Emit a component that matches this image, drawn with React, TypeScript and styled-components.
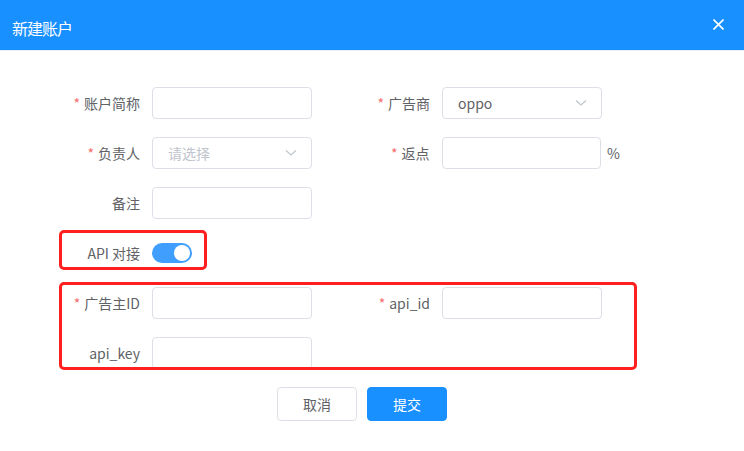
import React from "react";
import styled, { createGlobalStyle } from "styled-components";

const Global = createGlobalStyle`
  html, body { margin: 0; padding: 0; background: #fff; }
  body { font-family: "Noto Sans CJK SC", "Noto Sans", sans-serif; }
  * { box-sizing: border-box; }
`;

const Dialog = styled.div`
  position: relative;
  width: 744px;
  height: 451px;
  background: #fff;
  overflow: hidden;
`;

const Header = styled.div`
  height: 51px;
  background: #1890ff;
  display: flex;
  align-items: center;
  justify-content: space-between;
  padding: 0 20px 0 12px;
  border-bottom: 1px solid #e9eef5;
`;

const Title = styled.div`
  color: #fff;
  font-size: 16px;
  letter-spacing: -1px;
  padding-top: 6px;
`;

const Close = styled.button`
  border: 0;
  background: transparent;
  padding: 0;
  width: 11px;
  height: 11px;
  display: flex;
  margin-top: -2px;
`;

const Body = styled.div`
  padding: 36px 0 0 40px;
`;

const Grid = styled.div`
  display: grid;
  grid-template-columns: 290px 290px;
  row-gap: 18px;
`;

const Item = styled.div`
  display: flex;
  align-items: center;
  height: 32px;
`;

const Label = styled.label`
  width: 112px;
  padding-right: 12px;
  text-align: right;
  font-size: 14px;
  color: #606266;
  white-space: nowrap;
`;

const Star = styled.span`
  color: #f56c6c;
  margin-right: 4px;
`;

const Input = styled.div<{ $placeholder?: boolean }>`
  width: 160px;
  height: 32px;
  border: 1px solid #dcdfe6;
  border-radius: 4px;
  background: #fff;
  display: flex;
  align-items: center;
  justify-content: space-between;
  padding: 0 14px 0 15px;
  font-size: 14px;
  color: ${(p) => (p.$placeholder ? "#c0c4cc" : "#606266")};
`;

const Suffix = styled.span`
  margin-left: 6px;
  font-size: 14px;
  color: #606266;
`;

const Switch = styled.div<{ $on: boolean }>`
  position: relative;
  width: 40px;
  height: 20px;
  border-radius: 10px;
  background: ${(p) => (p.$on ? "#409eff" : "#dcdfe6")};
  &::after {
    content: "";
    position: absolute;
    top: 2px;
    left: ${(p) => (p.$on ? "22px" : "2px")};
    width: 16px;
    height: 16px;
    border-radius: 50%;
    background: #fff;
  }
`;

const Actions = styled.div`
  display: flex;
  gap: 10px;
  padding: 18px 0 0 237px;
`;

const Button = styled.button<{ $primary?: boolean }>`
  width: 80px;
  height: 34px;
  border-radius: 4px;
  font-family: inherit;
  font-size: 14px;
  border: 1px solid ${(p) => (p.$primary ? "#1890ff" : "#dcdfe6")};
  background: ${(p) => (p.$primary ? "#1890ff" : "#fff")};
  color: ${(p) => (p.$primary ? "#fff" : "#606266")};
`;

const Mark = styled.div<{ $x: number; $y: number; $w: number; $h: number }>`
  position: absolute;
  left: ${(p) => p.$x}px;
  top: ${(p) => p.$y}px;
  width: ${(p) => p.$w}px;
  height: ${(p) => p.$h}px;
  border: 3px solid #ff1f1f;
  border-radius: 5px;
  pointer-events: none;
`;

const Chevron = () => (
  <svg width="12" height="8" viewBox="0 0 12 8" fill="none">
    <path d="M1 1.5 L6 6 L11 1.5" stroke="#c0c4cc" strokeWidth="1.2" />
  </svg>
);

const Field = ({ label, required, children }: { label: string; required?: boolean; children?: React.ReactNode }) => (
  <Item>
    <Label>
      {required && <Star>*</Star>}
      {label}
    </Label>
    {children}
  </Item>
);

export default function App() {
  return (
    <>
      <Global />
      <Dialog>
        <Header>
          <Title>新建账户</Title>
          <Close aria-label="close">
            <svg width="11" height="11" viewBox="0 0 11 11">
              <path d="M0.5 0.5 L10.5 10.5 M10.5 0.5 L0.5 10.5" stroke="#fff" strokeWidth="1.6" />
            </svg>
          </Close>
        </Header>
        <Body>
          <Grid>
            <Field label="账户简称" required>
              <Input />
            </Field>
            <Field label="广告商" required>
              <Input>
                oppo
                <Chevron />
              </Input>
            </Field>
            <Field label="负责人" required>
              <Input $placeholder>
                请选择
                <Chevron />
              </Input>
            </Field>
            <Field label="返点" required>
              <Input />
              <Suffix>%</Suffix>
            </Field>
            <Field label="备注">
              <Input />
            </Field>
            <div />
            <Field label="API 对接">
              <Switch $on />
            </Field>
            <div />
            <Field label="广告主ID" required>
              <Input />
            </Field>
            <Field label="api_id" required>
              <Input />
            </Field>
            <Field label="api_key">
              <Input />
            </Field>
          </Grid>
          <Actions>
            <Button>取消</Button>
            <Button $primary>提交</Button>
          </Actions>
        </Body>
        <Mark $x={59} $y={230} $w={148} $h={40} />
        <Mark $x={59} $y={282} $w={578} $h={88} />
      </Dialog>
    </>
  );
}
